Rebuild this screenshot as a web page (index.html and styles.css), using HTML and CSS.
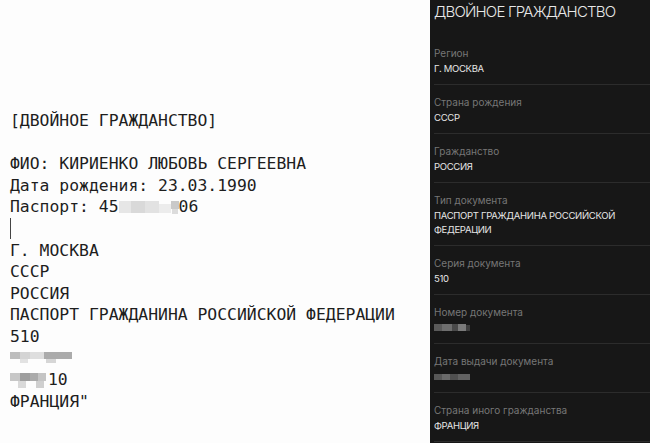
FILE: index.html
```html
<!DOCTYPE html>
<html lang="ru">
<head>
<meta charset="utf-8">
<link rel="stylesheet" href="styles.css">
</head>
<body>
<div class="page">
  <div class="note">
    <div class="line">[ДВОЙНОЕ ГРАЖДАНСТВО]</div>
    <div class="line"></div>
    <div class="line">ФИО: КИРИЕНКО ЛЮБОВЬ СЕРГЕЕВНА</div>
    <div class="line">Дата рождения: 23.03.1990</div>
    <div class="line">Паспорт: 45<svg class="blur blur-pass" width="60" height="16" viewBox="0 0 60 16"><rect x="0" y="1" width="12" height="12" fill="#e6e6e6"/><rect x="12" y="1" width="14" height="12" fill="#d9d9d9"/><rect x="26" y="1" width="14" height="12" fill="#e2e2e2"/><rect x="40" y="4" width="12" height="9" fill="#ececec"/><rect x="52" y="1" width="8" height="8" fill="#c9c9c9"/><rect x="53" y="9" width="6" height="5" fill="#dcdcdc"/></svg>06</div>
    <div class="line"><span class="cursor"></span></div>
    <div class="line">Г. МОСКВА</div>
    <div class="line">СССР</div>
    <div class="line">РОССИЯ</div>
    <div class="line">ПАСПОРТ ГРАЖДАНИНА РОССИЙСКОЙ ФЕДЕРАЦИИ</div>
    <div class="line">510</div>
    <div class="line"><svg class="blur" width="62" height="12" viewBox="0 0 62 12"><rect x="0" y="0" width="10" height="7" fill="#bdbdbd"/><rect x="10" y="0" width="10" height="7" fill="#d4d4d4"/><rect x="20" y="0" width="14" height="7" fill="#dedede"/><rect x="34" y="0" width="28" height="7" fill="#ababab"/><rect x="10" y="7" width="8" height="4" fill="#e2e2e2"/><rect x="36" y="7" width="10" height="4" fill="#d6d6d6"/></svg></div>
    <div class="line"><svg class="blur blur-ten" width="40" height="16" viewBox="0 0 40 16"><rect x="2" y="0" width="10" height="8" fill="#c7c7c7"/><rect x="12" y="0" width="10" height="8" fill="#9e9e9e"/><rect x="22" y="0" width="8" height="8" fill="#ababab"/><rect x="30" y="0" width="8" height="8" fill="#c4c4c4"/><rect x="10" y="8" width="8" height="7" fill="#d9d9d9"/><rect x="28" y="8" width="8" height="7" fill="#cfcfcf"/></svg>10</div>
    <div class="line">ФРАНЦИЯ"</div>
  </div>
  <aside class="panel">
    <h1 class="panel-title">ДВОЙНОЕ ГРАЖДАНСТВО</h1>
    <div class="field">
      <div class="label">Регион</div>
      <div class="value">Г. МОСКВА</div>
    </div>
    <div class="field">
      <div class="label">Страна рождения</div>
      <div class="value">СССР</div>
    </div>
    <div class="field">
      <div class="label">Гражданство</div>
      <div class="value">РОССИЯ</div>
    </div>
    <div class="field">
      <div class="label">Тип документа</div>
      <div class="value">ПАСПОРТ ГРАЖДАНИНА РОССИЙСКОЙ ФЕДЕРАЦИИ</div>
    </div>
    <div class="field">
      <div class="label">Серия документа</div>
      <div class="value">510</div>
    </div>
    <div class="field">
      <div class="label">Номер документа</div>
      <div class="value"><svg class="dblur" width="36" height="10" viewBox="0 0 36 10"><rect x="0" y="1" width="8" height="7" fill="#5a5a5a"/><rect x="8" y="1" width="10" height="7" fill="#6e6e6e"/><rect x="18" y="1" width="6" height="7" fill="#4a4a4a"/><rect x="24" y="1" width="8" height="7" fill="#7a7a7a"/><rect x="32" y="2" width="4" height="6" fill="#3e3e3e"/></svg></div>
    </div>
    <div class="field">
      <div class="label">Дата выдачи документа</div>
      <div class="value"><svg class="dblur" width="36" height="10" viewBox="0 0 36 10"><rect x="0" y="2" width="8" height="6" fill="#575757"/><rect x="8" y="2" width="8" height="6" fill="#6a6a6a"/><rect x="16" y="2" width="8" height="6" fill="#505050"/><rect x="24" y="2" width="12" height="6" fill="#626262"/></svg></div>
    </div>
    <div class="field">
      <div class="label">Страна иного гражданства</div>
      <div class="value">ФРАНЦИЯ</div>
    </div>
  </aside>
</div>
</body>
</html>
```

FILE: styles.css
```css
html, body {
  margin: 0;
  padding: 0;
  height: 100%;
  background: #fdfdfd;
}

.page {
  display: flex;
  height: 443px;
  overflow: hidden;
}

.note {
  flex: 1;
  padding: 110px 0 0 10px;
  font-family: "DejaVu Sans Mono", "Liberation Mono", monospace;
  font-size: 16.4px;
  color: #1e1e1e;
}

.line {
  height: 21.6px;
  line-height: 21.6px;
  white-space: pre;
  display: flex;
  align-items: center;
}

.cursor {
  display: block;
  width: 1px;
  height: 21px;
  background: #444;
}

.blur {
  display: block;
  flex: none;
}

.blur-pass {
  margin-top: 1px;
}

.blur-ten {
  margin-left: -2px;
  margin-top: 2px;
}

.panel {
  width: 220px;
  flex: none;
  background: #171717;
  color: #e4e4e4;
  font-family: Inter, "Noto Sans", sans-serif;
  padding: 0 0 0 4px;
  box-sizing: border-box;
}

.panel-title {
  margin: 0 0 12px;
  font-size: 15px;
  font-weight: 300;
  line-height: 24px;
  letter-spacing: -0.8px;
  color: #e8e8e8;
}

.field {
  padding: 9px 0 8px;
  border-bottom: 1px solid #2c2c2c;
}

.label {
  font-size: 10px;
  line-height: 16px;
  color: #767676;
}

.value {
  margin-top: 1px;
  font-size: 9.5px;
  line-height: 14px;
  letter-spacing: -0.3px;
  color: #e6e6e6;
  min-height: 14px;
  display: flex;
  flex-wrap: wrap;
  align-items: center;
}

.dblur {
  display: block;
}
```
